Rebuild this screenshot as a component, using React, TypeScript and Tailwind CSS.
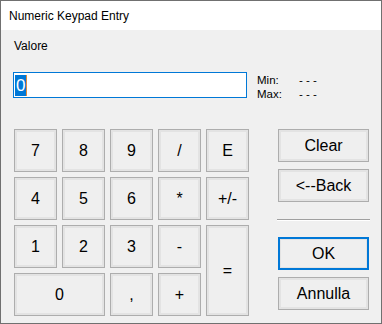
import React from 'react';

const font = { fontFamily: '"Liberation Sans", Arial, sans-serif' };

function KeyBtn({ label, className = '' }: { label: string; className?: string }) {
  return (
    <button
      className={`flex items-center justify-center border border-[#adadad] bg-[#efefef] shadow-[inset_0_0_0_2px_#e3e3e3] text-[16px] text-black ${className}`}
    >
      {label}
    </button>
  );
}

function SideBtn({ label, focused = false }: { label: string; focused?: boolean }) {
  return (
    <button
      className={
        focused
          ? 'flex h-[33px] w-[91px] items-center justify-center border-2 border-[#0078d7] bg-[#efefef] shadow-[inset_0_0_0_1px_#e3e3e3] text-[16px] text-black'
          : 'flex h-[33px] w-[91px] items-center justify-center border border-[#adadad] bg-[#efefef] shadow-[inset_0_0_0_2px_#e3e3e3] text-[16px] text-black'
      }
    >
      {label}
    </button>
  );
}

export default function App() {
  return (
    <div className="flex h-[324px] w-[382px] flex-col border border-[#707070] bg-[#f0f0f0]" style={font}>
      <div className="flex h-[29px] items-center bg-white pl-[8px] text-[12px] text-black">Numeric Keypad Entry</div>

      <div className="flex flex-col">
        <div className="ml-[13px] mt-[9px] text-[12px] leading-[14px] text-black">Valore</div>

        <div className="mt-[19px] flex">
          <div className="ml-[12px] flex h-[26px] w-[234px] items-center border border-[#0078d7] bg-white pl-[1px]">
            <span className="h-[21px] bg-[#0078d7] px-[1px] text-[17px] leading-[21px] text-white">0</span>
            <span className="h-[21px] w-px bg-[#e08a3c]" />
          </div>
          <div className="ml-[10px] mt-[1px] flex flex-col text-[11.5px] leading-[14px] text-black">
            <div className="flex">
              <span className="w-[42px]">Min:</span>
              <span>- - -</span>
            </div>
            <div className="flex">
              <span className="w-[42px]">Max:</span>
              <span>- - -</span>
            </div>
          </div>
        </div>

        <div className="mt-[28px] flex">
          <div className="ml-[13px] grid grid-cols-[repeat(5,43px)] grid-rows-[repeat(4,43px)] gap-[5px]">
            <KeyBtn label="7" />
            <KeyBtn label="8" />
            <KeyBtn label="9" />
            <KeyBtn label="/" />
            <KeyBtn label="E" />
            <KeyBtn label="4" />
            <KeyBtn label="5" />
            <KeyBtn label="6" />
            <KeyBtn label="*" />
            <KeyBtn label="+/-" />
            <KeyBtn label="1" />
            <KeyBtn label="2" />
            <KeyBtn label="3" />
            <KeyBtn label="-" />
            <KeyBtn label="=" className="row-span-2" />
            <KeyBtn label="0" className="col-span-2" />
            <KeyBtn label="," />
            <KeyBtn label="+" />
          </div>

          <div className="ml-[29px] flex flex-col">
            <SideBtn label="Clear" />
            <div className="mt-[7px]">
              <SideBtn label="<--Back" />
            </div>
            <div className="mt-[17px] h-[2px] w-[93px] -ml-px border-t border-[#a0a0a0] border-b-white border-b" />
            <div className="mt-[16px]">
              <SideBtn label="OK" focused />
            </div>
            <div className="mt-[7px]">
              <SideBtn label="Annulla" />
            </div>
          </div>
        </div>
      </div>
    </div>
  );
}
